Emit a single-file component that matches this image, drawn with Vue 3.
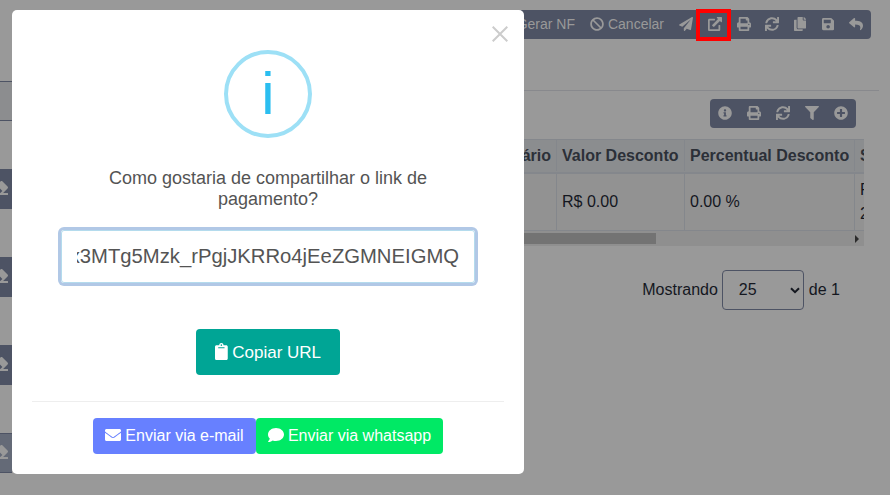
<script setup>
import { h } from 'vue'

const glyphs = {
  ban: [512, 'M256 8C119.034 8 8 119.033 8 256s111.034 248 248 248 248-111.034 248-248S392.967 8 256 8zm130.108 117.892c65.448 65.448 70 165.481 20.677 235.637L150.47 105.216c70.204-49.356 170.226-44.735 235.638 20.676zM125.892 386.108c-65.448-65.448-70-165.481-20.677-235.637L361.53 406.784c-70.203 49.356-170.226 44.736-235.638-20.676z'],
  plane: [512, 'M476 3.2L12.5 270.6c-18.1 10.4-15.8 35.6 2.2 43.2L121 358.4l287.3-253.2c5.5-4.9 13.3 2.6 8.6 8.3L176 407v80.5c0 23.6 28.5 32.9 42.5 15.8L282 426l124.6 52.2c14.2 6 30.4-2.9 33-18.2l72-432C515 7.8 493.3-6.8 476 3.2z'],
  share: [512, 'M488 0H344c-20 0-30 24-16 38l38 38L154 288c-8 8-8 20 0 28l42 42c8 8 20 8 28 0l212-212 38 38c14 14 38 4 38-16V24c0-13-11-24-24-24zM400 288c-8 0-16 8-16 16v144H64V128h176c8 0 16-8 16-16V80c0-8-8-16-16-16H48C22 64 0 86 0 112v352c0 26 22 48 48 48h352c26 0 48-22 48-48V304c0-8-8-16-16-16z'],
  print: [512, 'M448 192V77.25c0-8.49-3.37-16.62-9.37-22.63L393.37 9.37c-6-6-14.14-9.37-22.63-9.37H96C78.33 0 64 14.33 64 32v160c-35.35 0-64 28.65-64 64v112c0 8.84 7.16 16 16 16h48v96c0 17.67 14.33 32 32 32h320c17.67 0 32-14.33 32-32v-96h48c8.84 0 16-7.16 16-16V256c0-35.35-28.65-64-64-64zm-64 256H128v-96h256v96zm0-224H128V64h192v48c0 8.84 7.16 16 16 16h48v96zm48 72c-13.25 0-24-10.75-24-24 0-13.26 10.75-24 24-24s24 10.74 24 24c0 13.25-10.75 24-24 24z'],
  sync: [512, 'M440.65 12.57l4 82.77A247.16 247.16 0 0 0 255.83 8C134.73 8 33.91 94.92 12.29 209.82A12 12 0 0 0 24.09 224h49.05a12 12 0 0 0 11.67-9.26 175.91 175.91 0 0 1 317-56.94l-101.46-4.86a12 12 0 0 0-12.57 12v47.41a12 12 0 0 0 12 12H500a12 12 0 0 0 12-12V12a12 12 0 0 0-12-12h-47.37a12 12 0 0 0-11.98 12.57zM255.83 432a175.61 175.61 0 0 1-146-77.8l101.8 4.87a12 12 0 0 0 12.57-12v-47.4a12 12 0 0 0-12-12H12a12 12 0 0 0-12 12V500a12 12 0 0 0 12 12h47.35a12 12 0 0 0 12-12.6l-4.15-82.57A247.17 247.17 0 0 0 255.83 504c121.11 0 221.93-86.92 243.55-201.82a12 12 0 0 0-11.8-14.18h-49.05a12 12 0 0 0-11.67 9.26A175.86 175.86 0 0 1 255.83 432z'],
  copy: [448, 'M320 448v40c0 13.255-10.745 24-24 24H24c-13.255 0-24-10.745-24-24V120c0-13.255 10.745-24 24-24h72v296c0 30.879 25.121 56 56 56h168zm0-344V0H152c-13.255 0-24 10.745-24 24v368c0 13.255 10.745 24 24 24h272c13.255 0 24-10.745 24-24V128H344c-13.2 0-24-10.8-24-24zm120.971-31.029L375.029 7.029A24 24 0 0 0 358.059 0H352v96h96v-6.059a24 24 0 0 0-7.029-16.97z'],
  save: [448, 'M433.941 129.941l-83.882-83.882A48 48 0 0 0 316.118 32H48C21.49 32 0 53.49 0 80v352c0 26.51 21.49 48 48 48h352c26.51 0 48-21.49 48-48V163.882a48 48 0 0 0-14.059-33.941zM224 416c-35.346 0-64-28.654-64-64 0-35.346 28.654-64 64-64s64 28.654 64 64c0 35.346-28.654 64-64 64zm96-304.52V212c0 6.627-5.373 12-12 12H76c-6.627 0-12-5.373-12-12V108c0-6.627 5.373-12 12-12h228.52c3.183 0 6.235 1.264 8.485 3.515l3.48 3.48A11.996 11.996 0 0 1 320 111.48z'],
  reply: [512, 'M8.309 189.836L184.313 37.851C199.719 24.546 224 35.347 224 56.015v80.053c160.629 1.839 288 34.032 288 186.258 0 61.441-39.581 122.309-83.333 154.132-13.653 9.931-33.111-2.533-28.077-18.631 45.344-145.012-21.507-183.51-176.59-185.742V360c0 20.7-24.3 31.453-39.687 18.164l-176.004-152c-11.071-9.562-11.086-26.753 0-36.328z'],
  info: [512, 'M256 8C119.043 8 8 119.083 8 256c0 136.997 111.043 248 248 248s248-111.003 248-248C504 119.083 392.957 8 256 8zm0 110c23.196 0 42 18.804 42 42s-18.804 42-42 42-42-18.804-42-42 18.804-42 42-42zm56 254c0 6.627-5.373 12-12 12h-88c-6.627 0-12-5.373-12-12v-24c0-6.627 5.373-12 12-12h12v-64h-12c-6.627 0-12-5.373-12-12v-24c0-6.627 5.373-12 12-12h64c6.627 0 12 5.373 12 12v100h12c6.627 0 12 5.373 12 12v24z'],
  filter: [512, 'M487.976 0H24.028C2.71 0-8.047 25.866 7.058 40.971L192 225.941V432c0 7.831 3.821 15.17 10.237 19.662l80 55.98C298.02 518.69 320 507.493 320 487.98V225.941l184.947-184.97C520.021 25.896 509.338 0 487.976 0z'],
  plus: [512, 'M256 8C119 8 8 119 8 256s111 248 248 248 248-111 248-248S393 8 256 8zm144 276c0 6.6-5.4 12-12 12h-92v92c0 6.6-5.4 12-12 12h-56c-6.6 0-12-5.4-12-12v-92h-92c-6.6 0-12-5.4-12-12v-56c0-6.6 5.4-12 12-12h92v-92c0-6.6 5.4-12 12-12h56c6.6 0 12 5.4 12 12v92h92c6.6 0 12 5.4 12 12v56z'],
  envelope: [512, 'M502.3 190.8c3.9-3.1 9.7-.2 9.7 4.7V400c0 26.5-21.5 48-48 48H48c-26.5 0-48-21.5-48-48V195.6c0-5 5.7-7.8 9.7-4.7 22.4 17.4 52.1 39.5 154.1 113.6 21.1 15.4 56.7 47.8 92.2 47.6 35.7.3 72-32.8 92.3-47.6 102-74.1 131.6-96.3 154-113.7zM256 320c23.2.4 56.6-29.2 73.4-41.4 132.7-96.3 142.8-104.7 173.4-128.7 5.8-4.5 9.2-11.5 9.2-18.9v-19c0-26.5-21.5-48-48-48H48c-26.5 0-48 21.5-48 48v19c0 7.4 3.4 14.3 9.2 18.9 30.6 23.9 40.7 32.4 173.4 128.7 16.8 12.2 50.2 41.8 73.4 41.4z'],
  comment: [512, 'M256 32C114.6 32 0 125.1 0 240c0 49.6 21.4 95 57 130.7C44.5 421.1 2.7 466 2.2 466.5c-2.2 2.3-2.8 5.7-1.5 8.7S4.8 480 8 480c66.3 0 116-31.8 140.6-51.4 32.7 12.3 69 19.4 107.4 19.4 141.4 0 256-93.1 256-208S397.4 32 256 32z'],
  clipboard: [384, 'M384 112v352c0 26.51-21.49 48-48 48H48c-26.51 0-48-21.49-48-48V112c0-26.51 21.49-48 48-48h80c0-35.29 28.71-64 64-64s64 28.71 64 64h80c26.51 0 48 21.49 48 48zM192 40c-13.255 0-24 10.745-24 24s10.745 24 24 24 24-10.745 24-24-10.745-24-24-24m96 114v-20a6 6 0 0 0-6-6H102a6 6 0 0 0-6 6v20a6 6 0 0 0 6 6h180a6 6 0 0 0 6-6z'],
  eraser: [512, 'M497.941 273.941c18.745-18.745 18.745-49.137 0-67.882l-160-160c-18.745-18.745-49.136-18.746-67.883 0l-256 256c-18.745 18.745-18.745 49.137 0 67.882l96 96A48.004 48.004 0 0 0 144 480h356c6.627 0 12-5.373 12-12v-40c0-6.627-5.373-12-12-12H355.883l142.058-142.059zm-302.627-62.627l137.373 137.373L265.373 416H150.628l-80-80 124.686-124.686z']
}

const Icon = (props) => {
  const [width, d] = glyphs[props.name]
  return h('svg', { class: 'icon', viewBox: `0 0 ${width} 512`, fill: 'currentColor' }, [h('path', { d })])
}
Icon.props = ['name']

const actions = ['plane', 'share', 'print', 'sync', 'copy', 'save', 'reply']
const tableActions = ['info', 'print', 'sync', 'filter', 'plus']
</script>

<template>
  <div class="page">
    <aside class="side">
      <div class="field"></div>
      <div v-for="n in 4" :key="n" class="erase" :class="{ muted: n === 4 }"><Icon name="eraser" /></div>
    </aside>

    <main class="main">
      <header class="top">
        <div class="toolbar">
          <span class="label">Gerar NF</span>
          <span class="label"><Icon name="ban" />Cancelar</span>
          <span v-for="a in actions" :key="a" class="tool" :class="a">
            <Icon :name="a" />
            <i v-if="a === 'share'" class="highlight"></i>
          </span>
        </div>
      </header>

      <section class="content">
        <div class="toolbar small">
          <span v-for="a in tableActions" :key="a" class="tool"><Icon :name="a" /></span>
        </div>

        <div class="table">
          <div class="row head">
            <div class="cell first">Valor Unitário</div>
            <div class="cell">Valor Desconto</div>
            <div class="cell">Percentual Desconto</div>
            <div class="cell">Status</div>
          </div>
          <div class="row body">
            <div class="cell first"></div>
            <div class="cell">R$ 0.00</div>
            <div class="cell">0.00 %</div>
            <div class="cell">P<br>2</div>
          </div>
          <div class="scroll">
            <div class="thumb"></div>
            <svg class="arrow" viewBox="0 0 4 8"><path d="M0 0L4 4L0 8Z" /></svg>
          </div>
        </div>

        <div class="pager">
          <span>Mostrando</span>
          <div class="select">
            25
            <svg class="chevron" viewBox="0 0 10 7"><path d="M1 1.2L5 5.2L9 1.2" /></svg>
          </div>
          <span class="total">de 1</span>
        </div>
      </section>
    </main>

    <div class="modal">
      <svg class="close" viewBox="0 0 16 16"><path d="M.7.7L15.3 15.3M15.3.7L.7 15.3" /></svg>
      <div class="badge">i</div>
      <p class="question">Como gostaria de compartilhar o link de pagamento?</p>
      <div class="url"><div class="value"><span>x3MTg5Mzk_rPgjJKRRo4jEeZGMNEIGMQ</span></div></div>
      <button class="copy-url"><Icon name="clipboard" />Copiar URL</button>
      <footer class="footer">
        <button class="mail"><Icon name="envelope" />Enviar via e-mail</button>
        <button class="whats"><Icon name="comment" />Enviar via whatsapp</button>
      </footer>
    </div>
  </div>
</template>

<style>
body { background: #999; overflow: hidden; }
</style>

<style scoped>
* { box-sizing: border-box; }
.page {
  position: relative;
  display: grid;
  grid-template-columns: 12px 1fr;
  width: 890px;
  height: 495px;
  overflow: hidden;
  background: #999;
  color: #14171f;
  font: 16px "Liberation Sans", Arial, sans-serif;
}
.icon { display: block; flex: none; height: 14px; width: auto; }
.side { display: flex; flex-direction: column; gap: 48px; padding-top: 81px; }
.field { height: 40px; background: #8c8d8f; border: solid #4d5364; border-width: 1px 0; }
.erase {
  display: flex;
  align-items: center;
  justify-content: flex-end;
  height: 40px;
  padding: 0 4px 2px 0;
  overflow: hidden;
  background: #4d5364;
  color: #999;
}
.erase .icon { height: 16px; }
.muted { background: #646a77; border: solid #4d5364; border-width: 1px 0; }
.main { min-width: 0; }
.top {
  display: flex;
  justify-content: flex-end;
  width: 867px;
  height: 91px;
  padding: 10px 8px 0 0;
  border-bottom: 1px solid #88898d;
}
.toolbar {
  display: flex;
  align-items: center;
  height: 29px;
  padding-bottom: 2px;
  border-radius: 4px;
  background: #4d5364;
  color: #999;
  font-size: 14px;
}
.label { display: flex; align-items: center; gap: 4px; padding: 0 7px 0 8px; }
.tool { position: relative; display: flex; justify-content: center; width: 28px; }
.plane { width: 29px; }
.share { width: 29.5px; }
.print { width: 28.5px; }
.save { width: 27.5px; }
.reply { width: 29.5px; }
.highlight { position: absolute; left: -4px; top: -8px; width: 35px; height: 32px; border: 4px solid #f00; }
.content { display: flex; flex-direction: column; width: 852px; padding-top: 8px; }
.small { align-self: flex-end; width: 146px; margin-right: 8px; }
.small .tool { flex: 1; }
.table { margin-top: 11px; overflow: hidden; }
.row { display: grid; grid-template-columns: 544px 128px 170px 60px; }
.cell { display: flex; align-items: center; padding-left: 5px; border-left: 1px solid #84878c; white-space: nowrap; }
.first { justify-content: flex-end; padding-right: 5px; border-left: 0; }
.head { height: 35px; padding-bottom: 1px; border-top: 1px solid #84878c; border-bottom: 2px solid #84878c; background: #8b8d8f; color: #2c3038; font-weight: bold; }
.body { height: 57px; border-bottom: 1px solid #84878c; background: #929292; line-height: 24px; }
.scroll { display: flex; align-items: center; justify-content: space-between; height: 15px; padding-right: 5px; background: #8f8f8f; }
.thumb { width: 644px; height: 11px; background: #737373; }
.arrow { width: 4px; height: 8px; fill: #2c2c2c; }
.pager { display: flex; align-items: center; align-self: flex-end; gap: 4px; margin: 24px 24px 0 0; }
.total { padding-left: 1px; }
.select {
  display: flex;
  align-items: center;
  justify-content: space-between;
  width: 82px;
  height: 40px;
  padding: 0 3px 0 16px;
  border: 1px solid #4d5364;
  border-radius: 4px;
}
.chevron { width: 10px; height: 7px; fill: none; stroke: #14171f; stroke-width: 2; }
.modal {
  position: absolute;
  left: 12px;
  top: 10px;
  display: flex;
  flex-direction: column;
  align-items: center;
  width: 512px;
  height: 464px;
  padding: 40px 20px 20px;
  border-radius: 5px;
  background: #fff;
}
.close { position: absolute; right: 16px; top: 16px; width: 16px; height: 16px; fill: none; stroke: #ccc; stroke-width: 2; }
.badge {
  display: flex;
  align-items: center;
  justify-content: center;
  width: 88px;
  height: 88px;
  border: 4px solid #9de0f6;
  border-radius: 50%;
  color: #2bbef0;
  font-size: 60px;
  line-height: 80px;
}
.question { width: 340px; margin: 30px 0 0; color: #545454; font-size: 18px; line-height: 21px; text-align: center; }
.url {
  width: 414px;
  height: 53px;
  margin-top: 20px;
  padding: 0 15px;
  border: 1px solid #b4dbed;
  border-radius: 3px;
  box-shadow: 0 0 0 3px #b1c8e6;
}
.value { display: flex; align-items: center; justify-content: flex-end; height: 100%; overflow: hidden; color: #545454; font-size: 20.25px; }
button { display: flex; align-items: center; justify-content: center; gap: 4px; padding: 0; border: 0; border-radius: 4px; color: #fff; font: 16px "Liberation Sans", Arial, sans-serif; }
button .icon { height: 16px; margin-bottom: 2px; }
.copy-url { gap: 4.5px; width: 144px; height: 46px; margin-top: 46px; padding-top: 2px; background: #00a595; font-size: 17px; }
.copy-url .icon { height: 17px; margin-bottom: 4px; }
.footer { display: flex; justify-content: center; width: 472px; margin-top: 26px; padding-top: 16px; border-top: 1px solid #eee; }
.mail { width: 163px; height: 36px; background: #6780ff; }
.whats { width: 187px; height: 36px; background: #00e965; }
</style>
